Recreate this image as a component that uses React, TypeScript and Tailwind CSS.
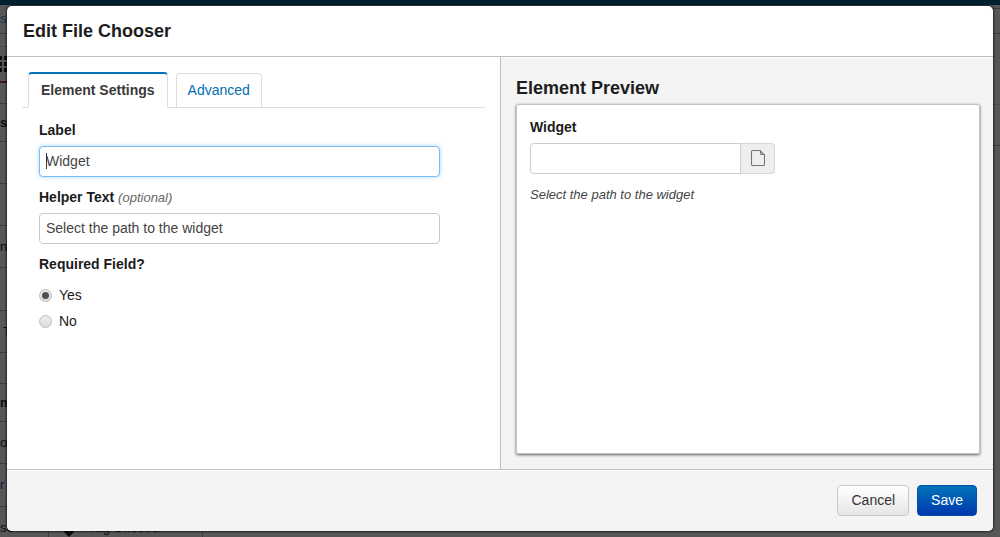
import React, { useState } from 'react';
import clsx from 'clsx';

type BackdropRow = {
  text: string;
  height: string;
  style?: string;
};

const backdropRows: BackdropRow[] = [
  { text: '', height: 'h-[23px] border-t-2 border-t-[#4d0f0f]' },
  { text: 's', height: 'h-[38px]', style: 'font-bold' },
  { text: '', height: 'h-[42px]' },
  { text: '', height: 'h-[42px]' },
  { text: 'ns', height: 'h-[42px]' },
  { text: '', height: 'h-[43px]' },
  { text: 'T', height: 'h-[42px]', style: 'pl-[3px]' },
  { text: '', height: 'h-[31px]' },
  { text: 'm', height: 'h-[38px]', style: 'font-bold' },
  { text: 'or', height: 'h-[42px]' },
  { text: 'r', height: 'h-[43px]', style: 'text-[#0b1233]' },
];

const Backdrop: React.FC = () => (
  <div aria-hidden="true" className="absolute inset-0 flex flex-col overflow-hidden bg-[#575757] text-[13px] text-[#0c0c0c]">
    <div className="h-[5px] shrink-0 bg-[#02202f]" />
    <div className="flex flex-1">
      <div className="flex w-1/2 flex-col">
        <div className="flex h-[29px] shrink-0 items-center border-b border-[#3a3a3a] text-[#0b3248]">s</div>
        <div className="h-[13px] shrink-0 border-b border-[#444]" />
        <div className="flex h-[34px] shrink-0 items-center">
          <svg width="7" height="18" viewBox="0 0 7 18" fill="#0c0c0c">
            <path d="M0 1h2v4H0zM4 1h3v4H4zM0 7h2v4H0zM4 7h3v4H4zM0 13h2v4H0zM4 13h3v4H4z" />
          </svg>
        </div>
        {backdropRows.map((row, index) => (
          <div
            key={index}
            className={clsx('flex shrink-0 items-center border-b border-b-[#3c3c3c]', row.height, row.style)}
          >
            {row.text}
          </div>
        ))}
        <div className="flex h-[42px] shrink-0 items-center">
          <span className="w-12">se</span>
          <span className="flex h-full w-[155px] items-center gap-3 border-x border-[#3c3c3c] pl-3">
            <svg width="16" height="22" viewBox="0 0 16 22" fill="#0c0c0c">
              <path d="M0 12 8 4l8 8-8 8z" />
            </svg>
            Tag Chooser
          </span>
        </div>
      </div>
      <div className="flex w-1/2 flex-col">
        <div className="h-1 border-b border-[#3c3c3c]" />
        <div className="h-[25px] border-b border-[#3c3c3c]" />
        <div className="h-[71px] border-b border-[#4a4a4a]" />
        <div className="h-[41px] border-b border-[#3c3c3c]" />
      </div>
    </div>
  </div>
);

const inputStyles =
  'h-[31px] w-full rounded border bg-white px-1.5 pb-0.5 text-[#444] outline-none';

const radioStyles =
  "flex h-[13px] w-[13px] appearance-none items-center justify-center rounded-full border border-[#bdbdbd] bg-linear-to-b from-[#ececec] to-[#dedede] before:h-[7px] before:w-[7px] before:rounded-full checked:before:bg-[#505050] before:content-['']";

const App: React.FC = () => {
  const [tab, setTab] = useState('settings');
  const [label, setLabel] = useState('Widget');
  const [helper, setHelper] = useState('Select the path to the widget');
  const [required, setRequired] = useState('yes');

  return (
    <div className="relative flex min-h-screen px-[7px] py-1.5 font-['Liberation_Sans',Arial,sans-serif] text-[14px] leading-5 text-[#1c1c1c]">
      <Backdrop />

      <div
        role="dialog"
        aria-labelledby="dialog-title"
        className="relative flex flex-1 flex-col overflow-hidden rounded-[5px] bg-white shadow-[0_0_2px_1px_rgba(0,0,0,0.6)]"
      >
        <header className="flex h-[51px] items-center border-b border-[#bfbfbf] px-4">
          <h1 id="dialog-title" className="text-[18px] leading-6 font-bold">Edit File Chooser</h1>
        </header>

        <div className="grid flex-1 grid-cols-2">
          <section className="px-[15px] pt-[15px]">
            <div role="tablist" className="flex h-9 items-end gap-2 border-b border-[#ddd] pl-1.5">
              <button
                role="tab"
                aria-selected={tab === 'settings'}
                onClick={() => setTab('settings')}
                className="-mb-px h-9 rounded-t border border-t-2 border-[#ddd] border-t-[#0070b8] border-b-white bg-white px-3 pb-0.5 font-bold text-[#3a3a3a]"
              >
                Element Settings
              </button>
              <button
                role="tab"
                aria-selected={tab === 'advanced'}
                onClick={() => setTab('advanced')}
                className="h-[34px] rounded-t border border-b-0 border-[#ddd] px-[11px] pb-0.5 text-[#006fb0]"
              >
                Advanced
              </button>
            </div>

            <form className="max-w-[418px] pt-3 pl-[17px]">
              <label htmlFor="label" className="block font-bold">Label</label>
              <div className="relative mt-1.5">
                <input
                  id="label"
                  value={label}
                  onChange={(e) => setLabel(e.target.value)}
                  className={clsx(inputStyles, 'border-[#78bcf5] shadow-[0_0_4px_rgba(110,185,245,0.6)]')}
                />
                <span className="pointer-events-none absolute top-[7px] left-[7px] h-4 w-px bg-[#333]" />
              </div>

              <label htmlFor="helper" className="mt-2.5 block font-bold">
                Helper Text <em className="text-[13px] leading-4 font-normal text-[#666]">(optional)</em>
              </label>
              <div className="mt-1.5">
                <input
                  id="helper"
                  value={helper}
                  onChange={(e) => setHelper(e.target.value)}
                  className={clsx(inputStyles, 'border-[#c9c9c9]')}
                />
              </div>

              <fieldset className="mt-2.5">
                <legend className="font-bold">Required Field?</legend>
                <div className="mt-[11px] flex flex-col gap-1.5">
                  <label className="flex items-center gap-[7px]">
                    <input
                      type="radio"
                      name="required"
                      checked={required === 'yes'}
                      onChange={() => setRequired('yes')}
                      className={radioStyles}
                    />
                    Yes
                  </label>
                  <label className="flex items-center gap-[7px]">
                    <input
                      type="radio"
                      name="required"
                      checked={required === 'no'}
                      onChange={() => setRequired('no')}
                      className={radioStyles}
                    />
                    No
                  </label>
                </div>
              </fieldset>
            </form>
          </section>

          <section className="flex flex-col border-l border-[#bfbfbf] bg-[#f4f4f4] pt-[19px] pr-[13px] pb-[15px] pl-[15px] shadow-[inset_0_1px_0_#fff]">
            <h2 className="text-[18px] leading-6 font-bold">Element Preview</h2>
            <div className="mt-1 flex-1 rounded-[2px] border border-[#c4c4c4] bg-white p-3 pl-[13px] shadow-[0_1px_3px_rgba(0,0,0,0.6)]">
              <label htmlFor="preview" className="block font-bold">{label}</label>
              <div className="mt-1.5 flex max-w-[245px]">
                <input
                  id="preview"
                  className="h-[31px] min-w-0 flex-1 rounded-l border border-[#ccc] bg-white px-1.5 outline-none"
                />
                <button
                  aria-label="Choose file"
                  type="button"
                  className="flex h-[31px] w-[34px] items-center justify-center rounded-r border border-l-0 border-[#d6d6d6] bg-[#eee] pb-0.5"
                >
                  <svg width="16" height="18" viewBox="0 0 16 18" fill="none" stroke="#777" strokeWidth="1.1" strokeLinejoin="round">
                    <path d="M2.500 1.500h7.500l4.500 4.500v9.500a1 1 0 0 1-1 1h-11a1 1 0 0 1-1-1v-13a1 1 0 0 1 1-1z" />
                    <path d="M10.500 2v2.500a1 1 0 0 0 1 1h2.500" />
                  </svg>
                </button>
              </div>
              <p className="mt-[11px] text-[13px] text-[#444] italic">{helper}</p>
            </div>
          </section>
        </div>

        <footer className="flex justify-end gap-2 border-t border-[#bfbfbf] bg-[#f4f4f4] px-4 py-[15px] shadow-[inset_0_1px_0_#fff]">
          <button className="h-[31px] rounded border border-[#c8c8c8] bg-linear-to-b from-white to-[#e6e6e6] px-[13px] pb-0.5 text-[#333]">
            Cancel
          </button>
          <button className="h-[31px] rounded border border-[#0052ab] bg-linear-to-b from-[#0072b8] to-[#0037ad] px-[13px] pb-0.5 text-white">
            Save
          </button>
        </footer>
      </div>
    </div>
  );
};

export default App;
